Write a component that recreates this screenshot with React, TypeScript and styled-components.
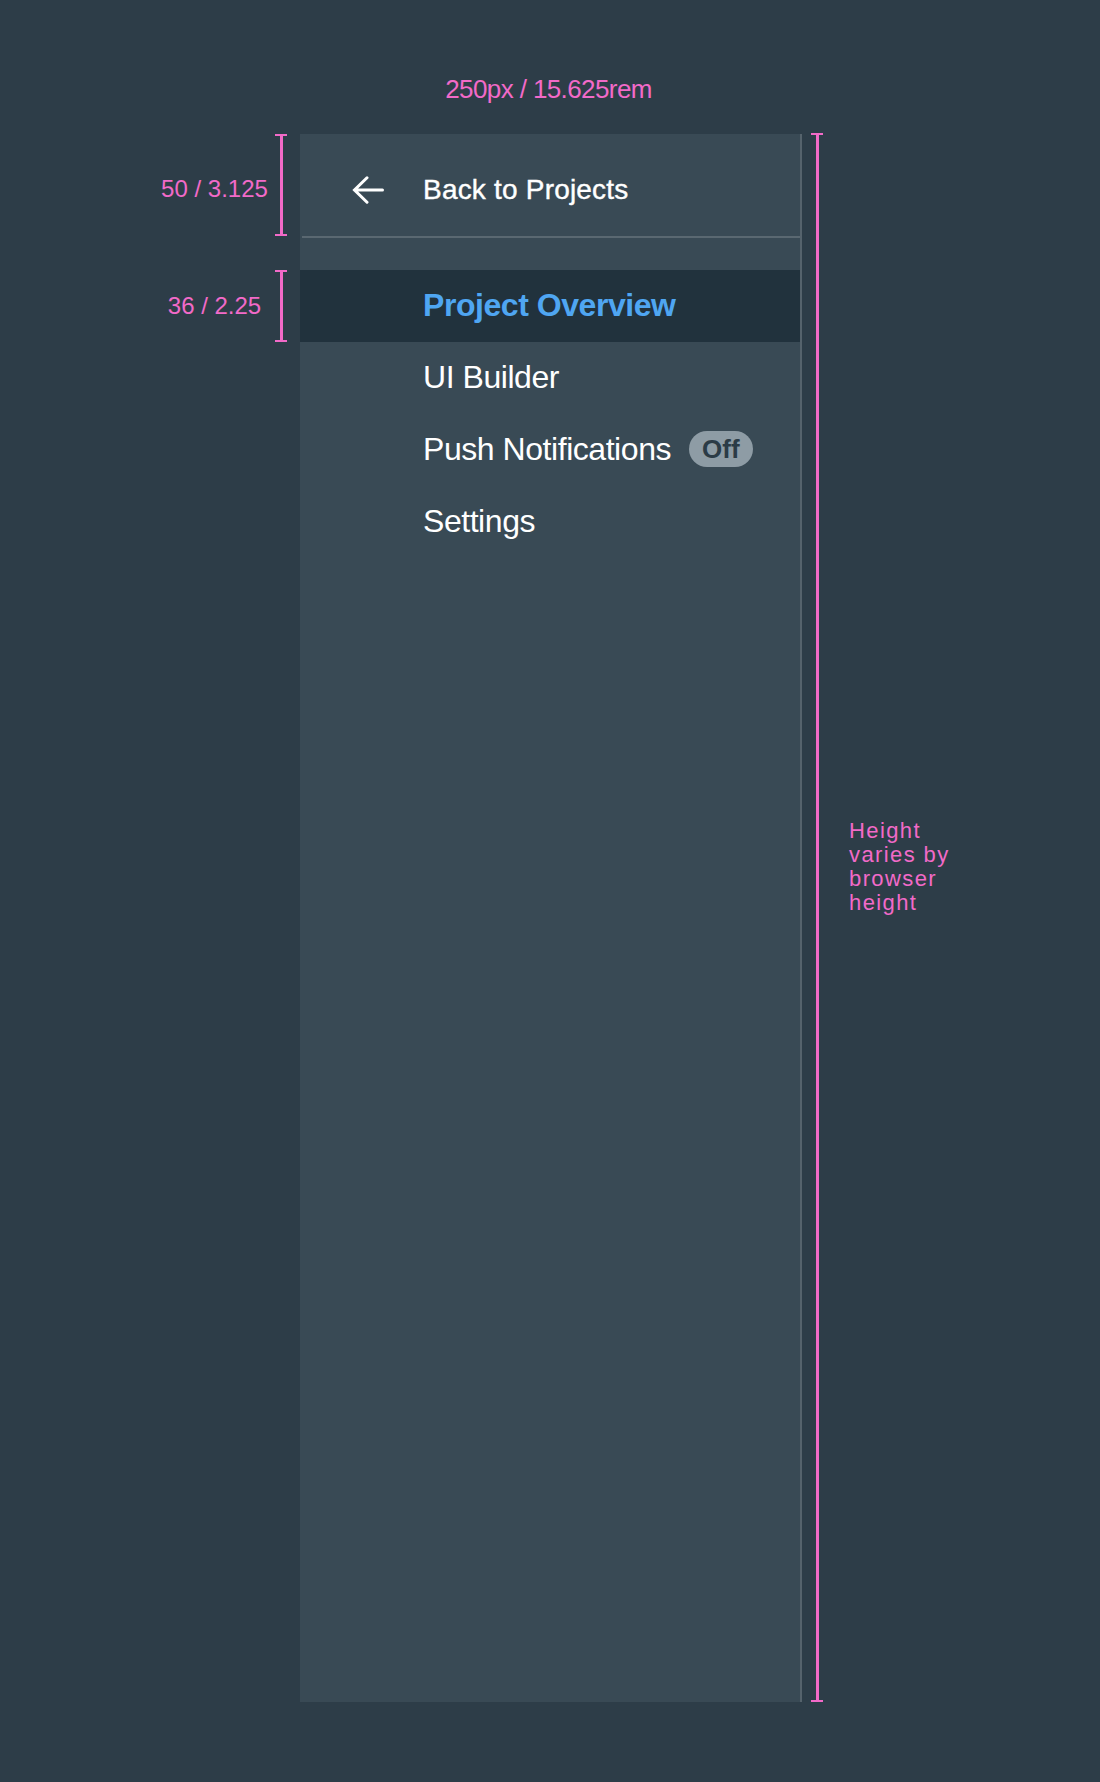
import React from "react";
import styled, { createGlobalStyle } from "styled-components";

const PINK = "#f26ac8";

const GlobalStyle = createGlobalStyle`
  html, body {
    margin: 0;
    padding: 0;
    background: #2d3d48;
  }
  body {
    font-family: "Liberation Sans", Arial, sans-serif;
  }
  * { box-sizing: border-box; }
`;

const Page = styled.div`
  display: grid;
  grid-template-columns: 300px 502px 1fr;
  grid-template-rows: auto 1568px;
  padding-top: 74px;
  padding-bottom: 80px;
  width: 1100px;
  background: #2d3d48;
`;

const TopLabel = styled.div`
  grid-column: 2;
  grid-row: 1;
  margin-bottom: 30px;
  padding-right: 5px;
  text-align: center;
  color: ${PINK};
  font-size: 26px;
  line-height: 30px;
  letter-spacing: -0.6px;
`;

const LeftNotes = styled.div`
  grid-column: 1;
  grid-row: 2;
  display: flex;
  flex-direction: column;
  align-items: flex-end;
  padding-right: 13px;
`;

const NoteGroup = styled.div<{ $h: number; $top?: number; $shift?: number }>`
  display: flex;
  height: ${(p) => p.$h}px;
  margin-top: ${(p) => p.$top ?? 0}px;
  padding-top: ${(p) => p.$shift ?? 0}px;
`;

const SideLabel = styled.div`
  width: 121px;
  display: flex;
  align-items: center;
  justify-content: center;
  color: ${PINK};
  font-size: 24px;
  line-height: 28px;
  white-space: nowrap;
`;

const Bracket = styled.div`
  width: 12px;
  display: flex;
  flex-direction: column;
  align-items: center;
  align-self: stretch;
`;

const BracketCap = styled.div`
  width: 12px;
  height: 2px;
  background: ${PINK};
  flex: none;
`;

const BracketStem = styled.div`
  width: 3px;
  flex: 1;
  background: ${PINK};
`;

const BracketWrap = styled.div<{ $pull?: number }>`
  display: flex;
  align-self: stretch;
  margin-top: ${(p) => p.$pull ?? 0}px;
`;

const RightNotes = styled.div`
  grid-column: 3;
  grid-row: 2;
  display: flex;
  padding-left: 9px;
  margin-top: -1px;
`;

const RightLabel = styled.div`
  margin-left: 26px;
  margin-top: 686px;
  color: ${PINK};
  font-size: 22px;
  line-height: 24px;
  letter-spacing: 1.4px;
  width: 120px;
`;

const Sidebar = styled.aside`
  grid-column: 2;
  grid-row: 2;
  background: #394a55;
  border-right: 2px solid #55636c;
  display: flex;
  flex-direction: column;
`;

const Header = styled.div`
  height: 102px;
  padding: 10px 0 0 52px;
  display: flex;
  align-items: center;
  gap: 39px;
  color: #ffffff;
`;

const HeaderTitle = styled.span`
  font-size: 28px;
  letter-spacing: 0.2px;
  -webkit-text-stroke: 0.4px #ffffff;
`;

const Divider = styled.div`
  height: 2px;
  margin-left: 2px;
  background: #5a6871;
`;

const Nav = styled.nav`
  display: flex;
  flex-direction: column;
  padding-top: 32px;
`;

const NavItem = styled.div<{ $active?: boolean }>`
  height: 72px;
  padding: 0 0 2px 123px;
  display: flex;
  align-items: center;
  font-size: 32px;
  letter-spacing: -0.45px;
  font-weight: ${(p) => (p.$active ? 700 : 400)};
  color: ${(p) => (p.$active ? "#4fa6f2" : "#ffffff")};
  background: ${(p) => (p.$active ? "#21323d" : "transparent")};
`;

const Badge = styled.span`
  margin-left: 18px;
  height: 36px;
  padding: 0 13px;
  border-radius: 18px;
  background: #8e9ca5;
  color: #2b3b46;
  font-size: 26px;
  font-weight: 700;
  letter-spacing: 0;
  display: inline-flex;
  align-items: center;
`;

const BackArrow = () => (
  <svg width="32" height="28" viewBox="0 0 32 28" fill="none">
    <path
      d="M30.5 14H2.5M15 1.8L2.5 14L15 26.2"
      stroke="#ffffff"
      strokeWidth="3"
      strokeLinecap="round"
      strokeLinejoin="miter"
    />
  </svg>
);

const PinkBracket = () => (
  <Bracket>
    <BracketCap />
    <BracketStem />
    <BracketCap />
  </Bracket>
);

export default function App() {
  return (
    <>
      <GlobalStyle />
      <Page>
        <TopLabel>250px / 15.625rem</TopLabel>

        <LeftNotes>
          <NoteGroup $h={102}>
            <SideLabel style={{ paddingTop: 8 }}>50 / 3.125</SideLabel>
            <PinkBracket />
          </NoteGroup>
          <NoteGroup $h={72} $top={34}>
            <SideLabel>36 / 2.25</SideLabel>
            <PinkBracket />
          </NoteGroup>
        </LeftNotes>

        <Sidebar>
          <Header>
            <BackArrow />
            <HeaderTitle>Back to Projects</HeaderTitle>
          </Header>
          <Divider />
          <Nav>
            <NavItem $active>Project Overview</NavItem>
            <NavItem>UI Builder</NavItem>
            <NavItem>
              Push Notifications
              <Badge>Off</Badge>
            </NavItem>
            <NavItem>Settings</NavItem>
          </Nav>
        </Sidebar>

        <RightNotes>
          <BracketWrap>
            <PinkBracket />
          </BracketWrap>
          <RightLabel>Height varies by browser height</RightLabel>
        </RightNotes>
      </Page>
    </>
  );
}
